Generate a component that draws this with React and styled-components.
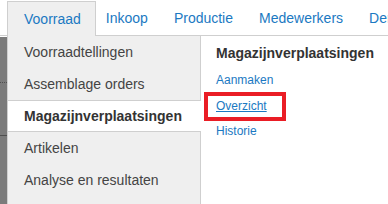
import React from "react";
import styled, { createGlobalStyle } from "styled-components";

const Global = createGlobalStyle`
  html, body { margin: 0; padding: 0; background: #fff; }
  body { font-family: "Liberation Sans", Arial, sans-serif; }
  * { box-sizing: border-box; }
`;

const Page = styled.div`
  width: 388px;
  height: 204px;
  overflow: hidden;
  display: flex;
  flex-direction: column;
`;

const Nav = styled.nav`
  display: flex;
  align-items: flex-end;
  height: 36px;
  padding: 1px 0 0 7px;
  border-bottom: 1px solid #cfcfcf;
  white-space: nowrap;
`;

const Tab = styled.a`
  display: flex;
  align-items: center;
  height: ${(p) => (p.$active ? "35px" : "34px")};
  padding: ${(p) => (p.$active ? "0 14px 1px 16px" : "0 13px")};
  margin-right: ${(p) => (p.$active ? "-3px" : "0")};
  margin-bottom: ${(p) => (p.$active ? "-1px" : "0")};
  border: ${(p) => (p.$active ? "1px solid #cfcfcf" : "none")};
  border-bottom: none;
  background: ${(p) => (p.$active ? "#efefef" : "transparent")};
  color: #1b79c2;
  font-size: 14px;
  text-decoration: none;
`;

const Body = styled.div`
  flex: 1;
  display: flex;
`;

const Strip = styled.div`
  width: 7px;
  margin-top: 1px;
  background: #7b7b7b;
  display: flex;
  flex-direction: column;
`;

const StripBlock = styled.div`
  height: ${(p) => p.$h}px;
  border-bottom: 1px ${(p) => p.$line} #4f4f4f;
`;

const Dropdown = styled.div`
  flex: 1;
  display: flex;
  border-left: 1px solid #cfcfcf;
`;

const LeftColumn = styled.ul`
  list-style: none;
  margin: 0;
  padding: 0;
  width: 193px;
  background: #efefef;
  border-right: 1px solid #cfcfcf;
`;

const Item = styled.li`
  height: 32px;
  display: flex;
  align-items: center;
  padding: 0 16px;
  font-size: 14px;
  color: ${(p) => (p.$active ? "#333" : "#444")};
  font-weight: ${(p) => (p.$active ? "bold" : "normal")};
  background: ${(p) => (p.$active ? "#fff" : "transparent")};
  border-top: ${(p) => (p.$active ? "1px solid #cfcfcf" : "none")};
  border-bottom: ${(p) => (p.$active ? "1px solid #cfcfcf" : "none")};
  margin-right: ${(p) => (p.$active ? "-1px" : "0")};
  white-space: nowrap;
`;

const RightPanel = styled.div`
  flex: 1;
  padding: 8px 0 0 15px;
  background: #fff;
`;

const Heading = styled.div`
  font-size: 14px;
  line-height: 18px;
  font-weight: bold;
  color: #333;
  white-space: nowrap;
`;

const Links = styled.ul`
  list-style: none;
  margin: 11px 0 0;
  padding: 0;
  display: flex;
  flex-direction: column;
  gap: 11.5px;
`;

const LinkItem = styled.li`
  position: relative;
  font-size: 12px;
  line-height: 14px;
  align-self: flex-start;
`;

const Link = styled.a`
  color: #1b79c2;
  text-decoration: ${(p) => (p.$underline ? "underline" : "none")};
`;

const Highlight = styled.span`
  position: absolute;
  left: -12px;
  right: -19px;
  top: -7px;
  bottom: -8px;
  border: 4px solid #ea1d25;
  pointer-events: none;
`;

const tabs = ["Voorraad", "Inkoop", "Productie", "Medewerkers", "Demo"];
const items = [
  "Voorraadtellingen",
  "Assemblage orders",
  "Magazijnverplaatsingen",
  "Artikelen",
  "Analyse en resultaten",
];

export default function App() {
  return (
    <Page>
      <Global />
      <Nav>
        {tabs.map((t, i) => (
          <Tab key={t} $active={i === 0}>
            {t}
          </Tab>
        ))}
      </Nav>
      <Body>
        <Strip>
          <StripBlock $h={46} $line="dotted" />
          <StripBlock $h={53} $line="solid" />
        </Strip>
        <Dropdown>
          <LeftColumn>
            {items.map((it, i) => (
              <Item key={it} $active={i === 2}>
                {it}
              </Item>
            ))}
          </LeftColumn>
          <RightPanel>
            <Heading>Magazijnverplaatsingen</Heading>
            <Links>
              <LinkItem>
                <Link>Aanmaken</Link>
              </LinkItem>
              <LinkItem>
                <Link $underline>Overzicht</Link>
                <Highlight />
              </LinkItem>
              <LinkItem>
                <Link>Historie</Link>
              </LinkItem>
            </Links>
          </RightPanel>
        </Dropdown>
      </Body>
    </Page>
  );
}
